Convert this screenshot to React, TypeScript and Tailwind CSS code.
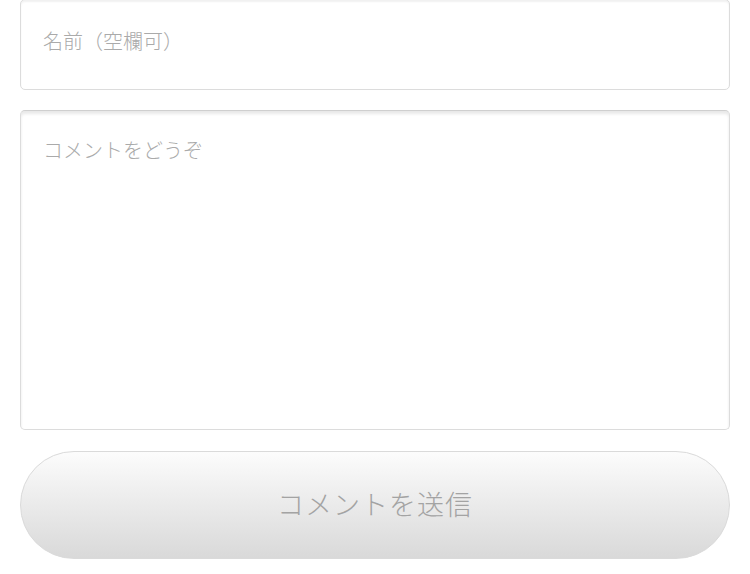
export default function App() {
  return (
    <div className="min-h-[574px] bg-white px-[20px] font-['Noto_Sans_CJK_JP','Noto_Sans',sans-serif]">
      <form className="flex w-[710px] flex-col" onSubmit={(e) => e.preventDefault()}>
        {/* Name */}
        <input
          type="text"
          placeholder="名前（空欄可）"
          className="-mt-[1px] h-[91px] w-full rounded-[5px] border border-[#dcdcdc] bg-white px-[22px] pb-[8px] text-[20px] font-light text-[#555] shadow-[inset_0_2px_2px_rgba(0,0,0,0.06)] outline-none placeholder:text-[#aaaaaa]"
        />

        {/* Comment */}
        <textarea
          placeholder="コメントをどうぞ"
          className="mt-[20px] h-[320px] w-full resize-none rounded-[5px] border border-[#dcdcdc] border-t-[#cfcfcf] bg-white px-[22px] pt-[25px] text-[20px] font-light leading-[28px] text-[#555] shadow-[inset_0_3px_3px_rgba(0,0,0,0.09)] outline-none placeholder:text-[#aaaaaa]"
        />

        {/* Submit */}
        <button
          type="submit"
          className="mt-[21px] h-[108px] w-full rounded-full border border-[#dadada] bg-gradient-to-b from-[#fcfcfc] to-[#d9d9d9] pb-[2px] text-[27px] font-light tracking-[1px] text-[#a3a3a3]"
        >
          コメントを送信
        </button>
      </form>
    </div>
  );
}
